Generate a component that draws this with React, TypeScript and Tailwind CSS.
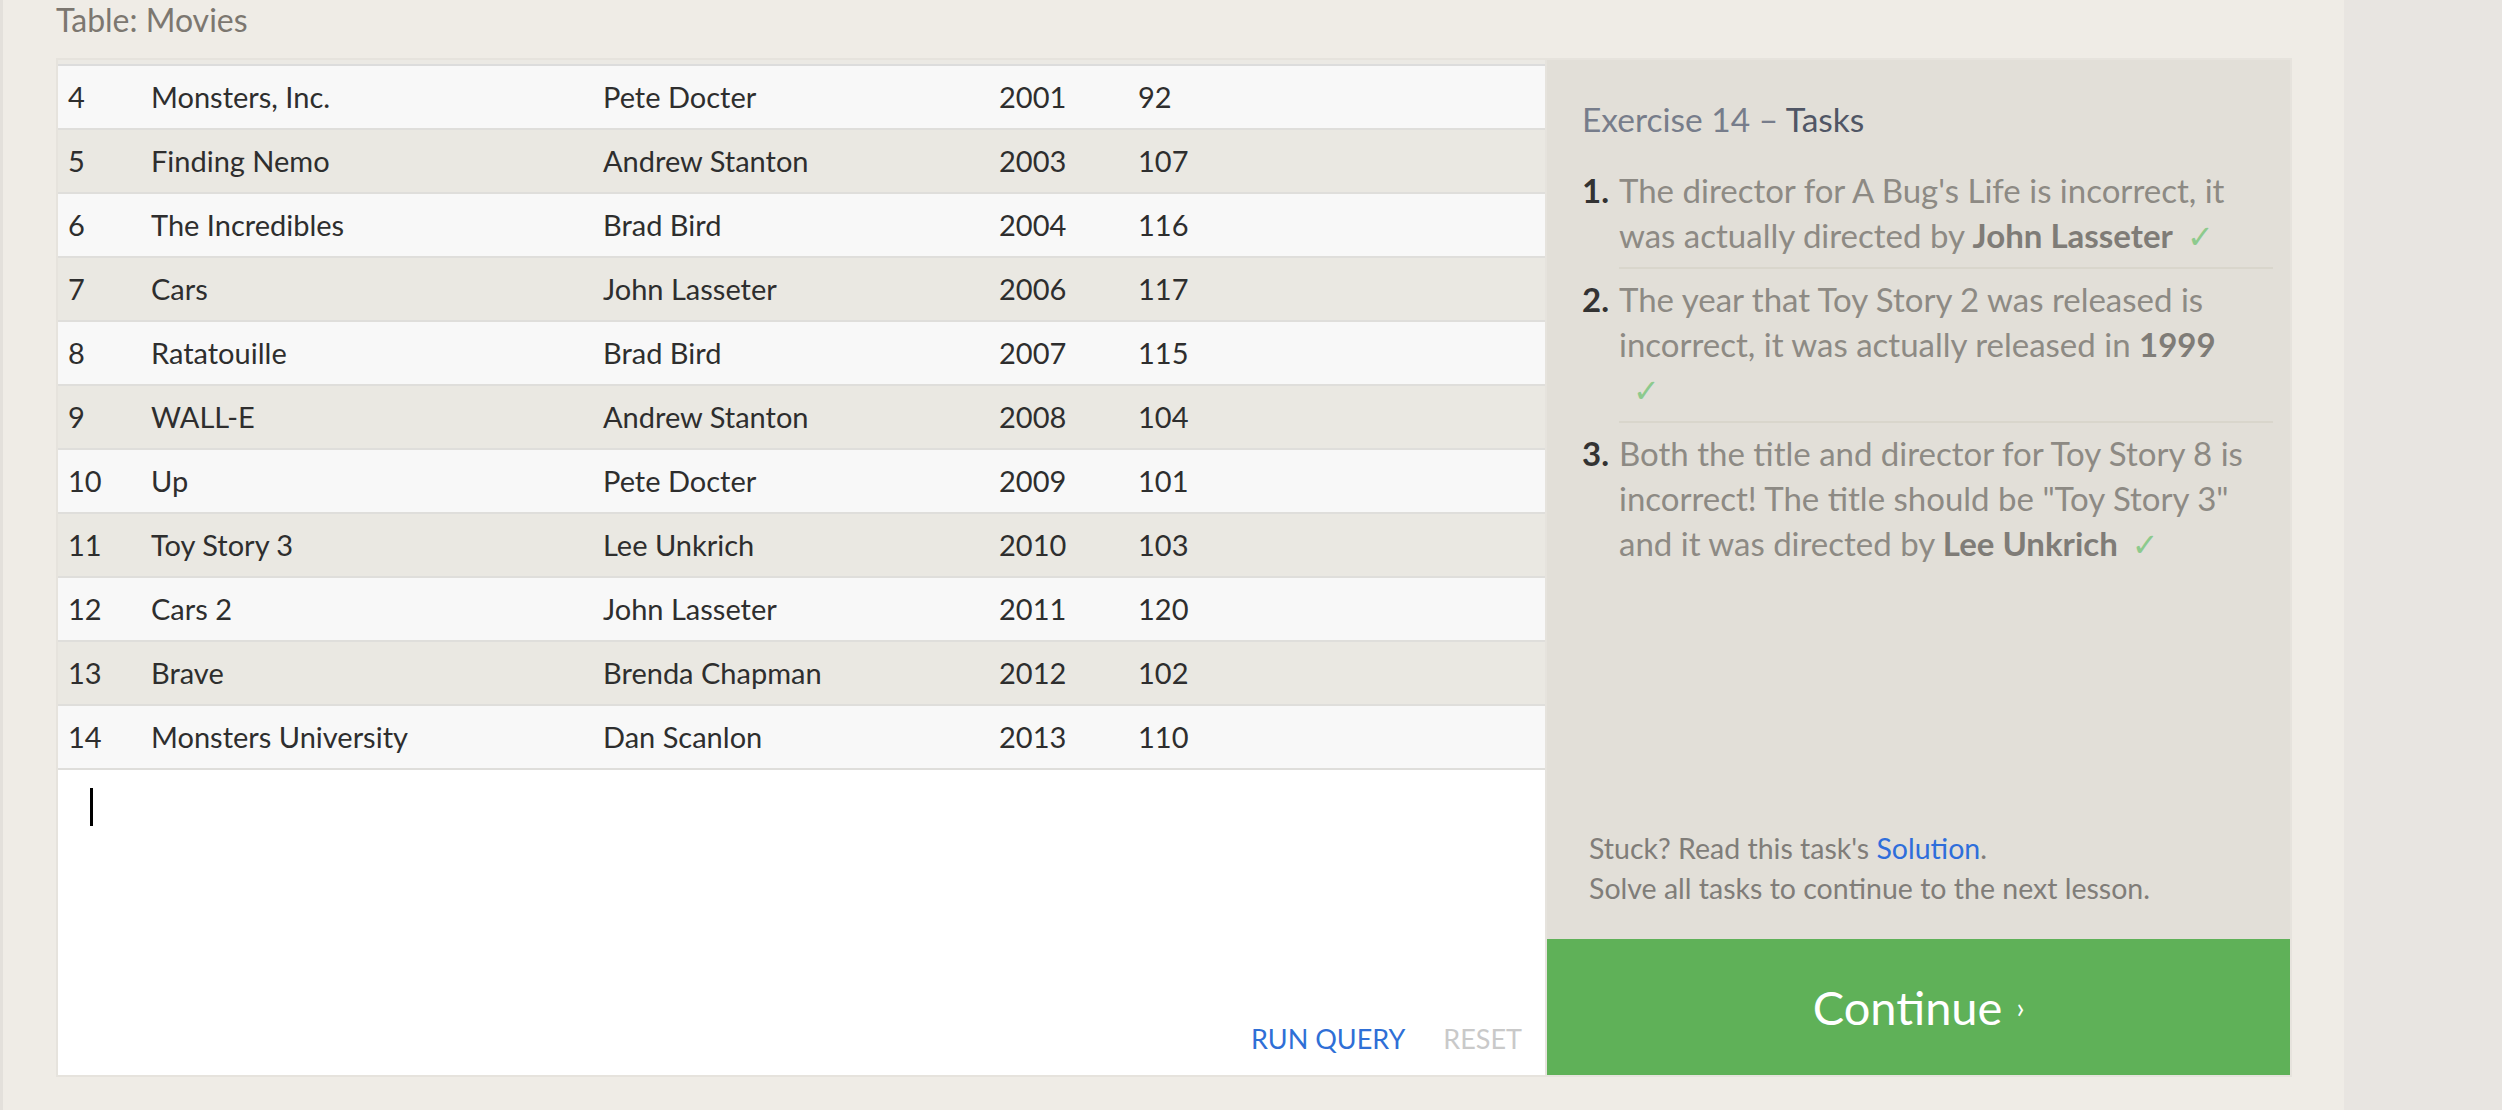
const rows = [
  [4, "Monsters, Inc.", "Pete Docter", 2001, 92],
  [5, "Finding Nemo", "Andrew Stanton", 2003, 107],
  [6, "The Incredibles", "Brad Bird", 2004, 116],
  [7, "Cars", "John Lasseter", 2006, 117],
  [8, "Ratatouille", "Brad Bird", 2007, 115],
  [9, "WALL-E", "Andrew Stanton", 2008, 104],
  [10, "Up", "Pete Docter", 2009, 101],
  [11, "Toy Story 3", "Lee Unkrich", 2010, 103],
  [12, "Cars 2", "John Lasseter", 2011, 120],
  [13, "Brave", "Brenda Chapman", 2012, 102],
  [14, "Monsters University", "Dan Scanlon", 2013, 110],
];

function Check() {
  return <span className="ml-[14px] inline-block font-['DejaVu_Sans',sans-serif] text-[32px] leading-none text-[#8dca8d]">✓</span>;
}

function Task({ n, last, children }: { n: number; last?: boolean; children: React.ReactNode }) {
  return (
    <li className="flex">
      <span className="w-[37px] shrink-0 pt-[8px] font-bold text-[#333]">{n}.</span>
      <div className={"flex-1 pt-[8px] pb-[9px] " + (last ? "" : "border-b-2 border-[#d9d6cc]")}>
        <div className="pr-[21px]">{children}</div>
      </div>
    </li>
  );
}

export default function App() {
  return (
    <div className="flex h-[1110px] w-[2502px] overflow-hidden bg-[#efece6] font-['Lato',sans-serif]">
      <div className="w-[3px] bg-[#e3e0db]" />
      <div className="flex-1 pl-[53px] pr-[52px]">
        <div className="h-[58px] pt-[1px]">
          <h2 className="text-[32px] leading-[38px] text-[#7c7770]">Table: Movies</h2>
        </div>
        <div className="flex h-[1019px] border-2 border-[#e6e3dd]">
          {/* table + editor */}
          <div className="flex flex-1 flex-col">
            <div className="bg-[#ebe9e4] pt-[4px]">
              <div className="border-t-2 border-[#dcdcdc]">
                {rows.map((r, i) => (
                  <div
                    key={i}
                    className={
                      "grid h-[64px] grid-cols-[83px_452px_396px_139px_1fr] border-b-2 border-[#dfdedb] text-[29px] leading-[61px] text-[#2e2e2e] " +
                      (i % 2 === 0 ? "bg-[#f8f8f8]" : "bg-[#eae8e2]")
                    }
                  >
                    {r.map((c, j) => (
                      <div key={j} className="pl-[10px] whitespace-nowrap">{c}</div>
                    ))}
                  </div>
                ))}
              </div>
            </div>
            <div className="flex flex-1 flex-col justify-between bg-white pb-[21px] pl-[32px] pr-[23px] pt-[18px]">
              <div className="h-[38px] w-[3px] bg-black" />
              <div className="flex justify-end gap-[38px] text-[27px] leading-[30px]">
                <span className="text-[#2f6fd6]">RUN QUERY</span>
                <span className="text-[#c9c9c9]">RESET</span>
              </div>
            </div>
          </div>

          {/* tasks panel */}
          <div className="flex w-[745px] flex-col border-l-2 border-[#e6e3dd] bg-[#e2dfd8]">
            <div className="flex-1 pl-[35px] pr-[17px] pt-[37px]">
              <h3 className="text-[33.5px] leading-[45px] text-[#777d8b]">
                Exercise 14 – <span className="text-[#505665]">Tasks</span>
              </h3>
              <ul className="mt-[18px] text-[33px] leading-[45px] text-[#8d8a84]">
                <Task n={1}>
                  The director for A Bug's Life is incorrect, it was actually directed by{" "}
                  <b className="text-[#7f7c77]">John Lasseter</b>
                  <Check />
                </Task>
                <Task n={2}>
                  The year that Toy Story 2 was released is incorrect, it was actually released in{" "}
                  <b className="text-[#7f7c77]">1999</b>
                  <Check />
                </Task>
                <Task n={3} last>
                  Both the title and director for Toy Story 8 is incorrect! The title should be "Toy Story 3" and it was
                  directed by <b className="text-[#7f7c77]">Lee Unkrich</b>
                  <Check />
                </Task>
              </ul>
            </div>
            <div className="mb-[31px] pl-[42px] text-[28.5px] leading-[40px] text-[#807d79]">
              <p>
                Stuck? Read this task's <span className="text-[#2e6edb]">Solution</span>.
              </p>
              <p>Solve all tasks to continue to the next lesson.</p>
            </div>
            <div className="flex h-[136px] items-center justify-center bg-[#5fb158] text-white">
              <span className="text-[47px]">Continue</span>
              <span className="ml-[14px] text-[28px]">›</span>
            </div>
          </div>
        </div>
      </div>
      <div className="w-[158px] bg-[#e8e5e1]" />
    </div>
  );
}
